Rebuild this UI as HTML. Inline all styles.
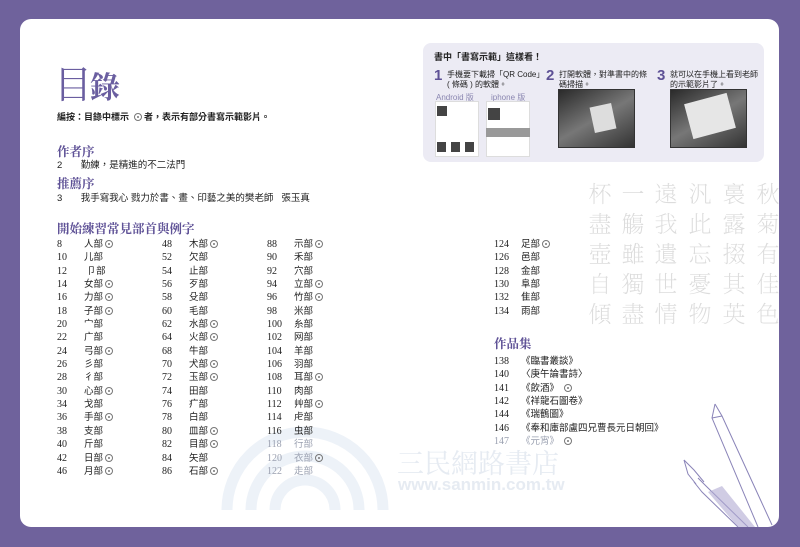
<!DOCTYPE html>
<html><head><meta charset="utf-8"><style>
*{margin:0;padding:0;box-sizing:border-box}
html,body{width:800px;height:547px;overflow:hidden}
body{background:#6f629c;position:relative;font-family:"Liberation Sans","Noto Sans CJK TC",sans-serif;color:#222}
.card{position:absolute;left:20px;top:19px;width:759px;height:508px;background:#fff;border-radius:11px}
.a{position:absolute;white-space:nowrap}
.h{font-family:"Liberation Serif","Noto Serif CJK SC",serif;color:#5e5196;font-size:12.5px;font-weight:bold}
.t{font-size:9.5px}
.col{position:absolute;font-size:9.5px;line-height:13.35px}
.col div{white-space:nowrap;position:relative}
.col .n{display:inline-block;width:27px;font-family:"Liberation Serif",serif;font-size:10px}
.o{display:inline-block;width:8px;height:8px;border:1px solid #777;border-radius:50%;position:relative;top:1px;margin-left:2px}
.o:after{content:"";position:absolute;left:2px;top:2px;width:2px;height:2px;background:#777;border-radius:50%}
.box{position:absolute;left:423px;top:43px;width:341px;height:119px;background:#ecebf4;border-radius:8px}
.ph{position:absolute;background:#555;border:1px solid #333}
.g{color:#9aa0b0}
.wm{position:absolute;font-family:"Noto Serif CJK SC",serif;font-weight:200;color:#dcdcdc;font-size:23px;line-height:30px;width:26px;text-align:center;white-space:normal;word-break:break-all}
</style></head><body>
<div class="card"></div>
<div class="a" style="left:54px;top:54px;font-family:'Noto Serif CJK SC',serif;font-size:38px;color:#6a5ea0;letter-spacing:-2px">目<span style="font-weight:bold;font-size:30px">錄</span></div>
<div class="a t" style="left:57px;top:110px;font-size:9px;font-weight:bold">編按：目錄中標示 <span class="o"></span> 者，表示有部分書寫示範影片。</div>
<div class="a h" style="left:57px;top:142px">作者序</div>
<div class="a t" style="left:57px;top:157px">2&nbsp;&nbsp;&nbsp;&nbsp;&nbsp;&nbsp;&nbsp;勤練，是精進的不二法門</div>
<div class="a h" style="left:57px;top:174px">推薦序</div>
<div class="a t" style="left:57px;top:190px">3&nbsp;&nbsp;&nbsp;&nbsp;&nbsp;&nbsp;&nbsp;我手寫我心 戮力於書、畫、印藝之美的樊老師&nbsp;&nbsp;&nbsp;張玉真</div>
<div class="a h" style="left:57px;top:219px">開始練習常見部首與例字</div>

<!-- watermark arcs -->
<svg class="a" style="left:215px;top:418px" width="180" height="92"><g fill="none" stroke="#edf2f8" stroke-width="11"><path d="M12 92A78 78 0 0 1 168 92"/><path d="M36 92A54 54 0 0 1 144 92"/><path d="M60 92A30 30 0 0 1 120 92"/></g></svg>
<div class="a" style="left:397px;top:442px;font-family:'Noto Serif CJK SC',serif;font-size:27px;color:#e6ebf2">三民網路書店</div>
<div class="a" style="left:398px;top:475px;font-size:17px;color:#e6ebf2;font-weight:bold">www.sanmin.com.tw</div>

<div class="col" style="left:57px;top:238px">
<div><span class="n">8</span>人部<span class="o"></span></div><div><span class="n">10</span>儿部</div><div><span class="n">12</span> 卩部</div><div><span class="n">14</span>女部<span class="o"></span></div><div><span class="n">16</span>力部<span class="o"></span></div><div><span class="n">18</span>子部<span class="o"></span></div><div><span class="n">20</span>宀部</div><div><span class="n">22</span>广部</div><div><span class="n">24</span>弓部<span class="o"></span></div><div><span class="n">26</span>彡部</div><div><span class="n">28</span>彳部</div><div><span class="n">30</span>心部<span class="o"></span></div><div><span class="n">34</span>戈部</div><div><span class="n">36</span>手部<span class="o"></span></div><div><span class="n">38</span>支部</div><div><span class="n">40</span>斤部</div><div><span class="n">42</span>日部<span class="o"></span></div><div><span class="n">46</span>月部<span class="o"></span></div>
</div>
<div class="col" style="left:162px;top:238px">
<div><span class="n">48</span>木部<span class="o"></span></div><div><span class="n">52</span>欠部</div><div><span class="n">54</span>止部</div><div><span class="n">56</span>歹部</div><div><span class="n">58</span>殳部</div><div><span class="n">60</span>毛部</div><div><span class="n">62</span>水部<span class="o"></span></div><div><span class="n">64</span>火部<span class="o"></span></div><div><span class="n">68</span>牛部</div><div><span class="n">70</span>犬部<span class="o"></span></div><div><span class="n">72</span>玉部<span class="o"></span></div><div><span class="n">74</span>田部</div><div><span class="n">76</span>疒部</div><div><span class="n">78</span>白部</div><div><span class="n">80</span>皿部<span class="o"></span></div><div><span class="n">82</span>目部<span class="o"></span></div><div><span class="n">84</span>矢部</div><div><span class="n">86</span>石部<span class="o"></span></div>
</div>
<div class="col" style="left:267px;top:238px">
<div><span class="n">88</span>示部<span class="o"></span></div><div><span class="n">90</span>禾部</div><div><span class="n">92</span>穴部</div><div><span class="n">94</span>立部<span class="o"></span></div><div><span class="n">96</span>竹部<span class="o"></span></div><div><span class="n">98</span>米部</div><div><span class="n">100</span>糸部</div><div><span class="n">102</span>网部</div><div><span class="n">104</span>羊部</div><div><span class="n">106</span>羽部</div><div><span class="n">108</span>耳部<span class="o"></span></div><div><span class="n">110</span>肉部</div><div><span class="n">112</span>艸部<span class="o"></span></div><div><span class="n">114</span>虍部</div><div><span class="n">116</span>虫部</div><div class="g"><span class="n">118</span>行部</div><div class="g"><span class="n">120</span>衣部<span class="o"></span></div><div class="g"><span class="n">122</span>走部</div>
</div>
<div class="col" style="left:494px;top:238px">
<div><span class="n">124</span>足部<span class="o"></span></div><div><span class="n">126</span>邑部</div><div><span class="n">128</span>金部</div><div><span class="n">130</span>阜部</div><div><span class="n">132</span>隹部</div><div><span class="n">134</span>雨部</div>
</div>
<div class="a h" style="left:494px;top:334px">作品集</div>
<div class="col" style="left:494px;top:355px">
<div><span class="n">138</span>《臨書叢談》</div><div><span class="n">140</span>〈庚午論書詩〉</div><div><span class="n">141</span>《飲酒》 <span class="o"></span></div><div><span class="n">142</span>《祥龍石圖卷》</div><div><span class="n">144</span>《瑞鶴圖》</div><div><span class="n">146</span>《奉和庫部盧四兄曹長元日朝回》</div><div class="g"><span class="n">147</span>《元宵》 <span class="o"></span></div>
</div>

<div class="wm" style="left:755px;top:178px">秋菊有佳色</div>
<div class="wm" style="left:721px;top:178px">裛露掇其英</div>
<div class="wm" style="left:687px;top:178px">汎此忘憂物</div>
<div class="wm" style="left:653px;top:178px">遠我遺世情</div>
<div class="wm" style="left:620px;top:178px">一觴雖獨盡</div>
<div class="wm" style="left:587px;top:178px">杯盡壺自傾</div>

<!-- pens -->
<svg class="a" style="left:660px;top:400px" width="120" height="127"><g stroke="#8a84b8" fill="none" stroke-width="1"><path d="M55 4L62 16L112 125"/><path d="M55 4L52 18L98 127"/><path d="M52 18L62 16"/><path d="M24 60L34 70L44 82"/><path d="M24 60L28 74L36 84"/><path d="M38 78L46 86L88 127"/><path d="M34 82L42 92L78 127"/></g><path d="M48 92L62 86L95 127L78 127Z" fill="#b0aad2" opacity=".6"/></svg>

<div class="box"></div>
<div class="a" style="left:434px;top:50px;font-size:9px;font-weight:bold">書中「書寫示範」這樣看！</div>
<div class="a" style="left:434px;top:67px;font-size:15px;font-weight:bold;color:#5e5196">1</div>
<div class="a" style="left:447px;top:70px;font-size:8px;line-height:10px">手機要下載掃「QR Code」<br>( 條碼 ) 的軟體。</div>
<div class="a" style="left:436px;top:92px;font-size:8px;color:#8a86b0">Android 版</div>
<div class="a" style="left:491px;top:92px;font-size:8px;color:#8a86b0">iphone 版</div>
<div class="a" style="left:435px;top:101px;width:44px;height:56px;background:#fff;border:1px solid #ddd"></div>
<div class="a" style="left:437px;top:106px;width:10px;height:10px;background:#444"></div>
<div class="a" style="left:437px;top:142px;width:40px;height:10px;background:repeating-linear-gradient(90deg,#444 0 9px,#fff 9px 14px)"></div>
<div class="a" style="left:486px;top:101px;width:44px;height:56px;background:#fff;border:1px solid #ddd"></div>
<div class="a" style="left:488px;top:108px;width:12px;height:12px;background:#444"></div>
<div class="a" style="left:486px;top:128px;width:44px;height:9px;background:#999"></div>
<div class="a" style="left:546px;top:67px;font-size:15px;font-weight:bold;color:#5e5196">2</div>
<div class="a" style="left:559px;top:70px;font-size:8px;line-height:10px">打開軟體，對準書中的條<br>碼掃描。</div>
<div class="ph" style="left:558px;top:89px;width:77px;height:59px;background:linear-gradient(150deg,#2a2a2a,#777 50%,#333)"></div>
<div class="a" style="left:592px;top:105px;width:22px;height:26px;background:#ddd;transform:rotate(-12deg)"></div>
<div class="a" style="left:657px;top:67px;font-size:15px;font-weight:bold;color:#5e5196">3</div>
<div class="a" style="left:670px;top:70px;font-size:8px;line-height:10px">就可以在手機上看到老師<br>的示範影片了。</div>
<div class="ph" style="left:670px;top:89px;width:77px;height:59px;background:linear-gradient(150deg,#2a2a2a,#777 50%,#333)"></div>
<div class="a" style="left:688px;top:98px;width:44px;height:36px;background:#e6e6e6;transform:rotate(-15deg)"></div>
</body></html>
